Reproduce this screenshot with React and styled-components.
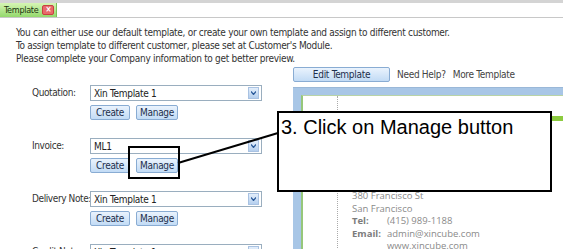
import React from "react";
import styled, { createGlobalStyle } from "styled-components";

const GlobalStyle = createGlobalStyle`
  html, body {
    margin: 0;
    padding: 0;
    background: #fff;
    overflow: hidden;
  }
  body {
    font-family: Tahoma, "DejaVu Sans Condensed", "Liberation Sans", sans-serif;
    font-size: 10px;
    letter-spacing: -0.3px;
    color: #333;
  }
`;

const Page = styled.div`
  position: relative;
  width: 563px;
  height: 249px;
  overflow: hidden;
`;

const TabBar = styled.div`
  height: 14px;
  border-top: 3px solid #d4d4d4;
  border-bottom: 1px solid #c8c8c8;
  display: flex;
  align-items: stretch;
`;

const Tab = styled.div`
  width: 57px;
  display: flex;
  align-items: center;
  gap: 4px;
  padding-left: 4px;
  box-sizing: border-box;
  background: linear-gradient(#d6f5b4, #93d86c);
  border-right: 1px solid #7bbf57;
  font-size: 9px;
  color: #1c3310;
`;

const CloseIcon = styled.span`
  width: 10px;
  height: 8px;
  background: #e86a6a;
  border: 1px solid #c84040;
  border-radius: 2px;
  color: #fff;
  font-size: 8px;
  line-height: 8px;
  text-align: center;
  font-weight: bold;
  letter-spacing: 0;
`;

const Intro = styled.div`
  padding: 8px 0 0 16px;
  line-height: 13px;
  font-size: 10px;
  color: #333;
`;

const Main = styled.div`
  display: grid;
  grid-template-columns: 293px 1fr;
  margin-top: 2px;
`;

const Forms = styled.div`
  display: flex;
  flex-direction: column;
  gap: 18px;
  padding: 18px 0 0 32px;
`;

const FieldRow = styled.div`
  display: grid;
  grid-template-columns: 58px 172px;
  row-gap: 4px;
`;

const Label = styled.div`
  font-size: 10px;
  letter-spacing: -0.4px;
  line-height: 16px;
  color: #333;
  white-space: nowrap;
`;

const Select = styled.div`
  height: 14px;
  border: 1px solid #9aaebf;
  display: flex;
  align-items: center;
  justify-content: space-between;
  padding-left: 3px;
  font-size: 10px;
  color: #222;
`;

const Arrow = styled.span`
  width: 9px;
  height: 10px;
  margin-right: 2px;
  background: linear-gradient(#e3eefb, #b5cfee);
  border: 1px solid #a9c2e2;
  display: flex;
  align-items: center;
  justify-content: center;
`;

const Buttons = styled.div`
  grid-column: 2;
  display: flex;
  gap: 6px;
`;

const Button = styled.div`
  height: 13px;
  padding: 0 ${(p) => p.$pad || 4}px;
  min-width: ${(p) => p.$min || 0}px;
  border: 1px solid #89acd3;
  border-radius: 2px;
  background: linear-gradient(#eaf3fd, #c2dbf5);
  color: #1d2f4d;
  font-size: 10px;
  line-height: 13px;
  text-align: center;
  box-sizing: content-box;
`;

const Right = styled.div`
  padding-top: 0;
`;

const Toolbar = styled.div`
  display: flex;
  align-items: center;
  gap: 7px;
  height: 15px;
  margin-bottom: 5px;
`;

const LinkText = styled.span`
  font-size: 10px;
  color: #444;
`;

const PreviewFrame = styled.div`
  background: #a8c6e6;
  border-top: 1px solid #9ab8d8;
  padding: 7px 0 0 8px;
  height: 200px;
`;

const Sheet = styled.div`
  background: #fff;
  border-left: 2px solid #96c77a;
  border-top: 1px solid #b9d3a6;
  height: 100%;
  display: grid;
  grid-template-columns: 35px 1fr;
`;

const Margin = styled.div`
  border-right: 1px dotted #aaa;
`;

const SheetBody = styled.div`
  display: flex;
  flex-direction: column;
`;

const GreenBand = styled.div`
  height: 5px;
  margin-top: 20px;
  background: #8ccb3f;
`;

const Company = styled.div`
  margin-top: 69px;
  padding-left: 14px;
  font-family: "Open Sans", "Liberation Sans", sans-serif;
  font-size: 9.5px;
  letter-spacing: 0;
  line-height: 12.5px;
  color: #8a8a8a;
  display: grid;
  grid-template-columns: 35px auto;
`;

const Full = styled.div`
  grid-column: 1 / 3;
`;

const Key = styled.div`
  font-weight: bold;
  color: #7c7c7c;
`;

const Callout = styled.div`
  position: absolute;
  left: 277px;
  top: 111px;
  width: 269px;
  height: 74px;
  border: 2px solid #000;
  background: #fff;
  font-family: "Liberation Sans", Arial, sans-serif;
  font-size: 20px;
  letter-spacing: 0;
  line-height: 22px;
  color: #000;
  padding: 3px 0 0 2px;
  box-sizing: content-box;
`;

const Highlight = styled.div`
  position: absolute;
  left: 128px;
  top: 146px;
  width: 48px;
  height: 29px;
  border: 2px solid #000;
`;

const Pointer = styled.svg`
  position: absolute;
  left: 0;
  top: 0;
  pointer-events: none;
`;

const rows = [
  { label: "Quotation:", value: "Xin Template 1" },
  { label: "Invoice:", value: "ML1" },
  { label: "Delivery Note:", value: "Xin Template 1" },
  { label: "Credit Note:", value: "Xin Template 1" },
];

export default function App() {
  return (
    <Page>
      <GlobalStyle />
      <TabBar>
        <Tab>
          Template
          <CloseIcon>×</CloseIcon>
        </Tab>
      </TabBar>
      <Intro>
        You can either use our default template, or create your own template and assign to different customer.
        <br />
        To assign template to different customer, please set at Customer's Module.
        <br />
        Please complete your Company information to get better preview.
      </Intro>
      <Main>
        <Forms>
          {rows.map((r) => (
            <FieldRow key={r.label}>
              <Label>{r.label}</Label>
              <Select>
                {r.value}
                <Arrow>
                  <svg width="5" height="4" viewBox="0 0 5 4">
                    <path d="M0 0.5 L2.5 3.5 L5 0.5" fill="none" stroke="#2a5a9a" strokeWidth="1.2" />
                  </svg>
                </Arrow>
              </Select>
              <Buttons>
                <Button $pad={5}>Create</Button>
                <Button $pad={3}>Manage</Button>
              </Buttons>
            </FieldRow>
          ))}
        </Forms>
        <Right>
          <Toolbar>
            <Button $min={87}>Edit Template</Button>
            <LinkText>Need Help?</LinkText>
            <LinkText>More Template</LinkText>
          </Toolbar>
          <PreviewFrame>
            <Sheet>
              <Margin />
              <SheetBody>
                <GreenBand />
                <Company>
                  <Full>380 Francisco St</Full>
                  <Full>San Francisco</Full>
                  <Key>Tel:</Key>
                  <div>(415) 989-1188</div>
                  <Key>Email:</Key>
                  <div>admin@xincube.com</div>
                  <div />
                  <div>www.xincube.com</div>
                </Company>
              </SheetBody>
            </Sheet>
          </PreviewFrame>
        </Right>
      </Main>
      <Highlight />
      <Pointer width="563" height="249">
        <line x1="178" y1="163" x2="278" y2="133" stroke="#000" strokeWidth="2" />
      </Pointer>
      <Callout>3. Click on Manage button</Callout>
    </Page>
  );
}
